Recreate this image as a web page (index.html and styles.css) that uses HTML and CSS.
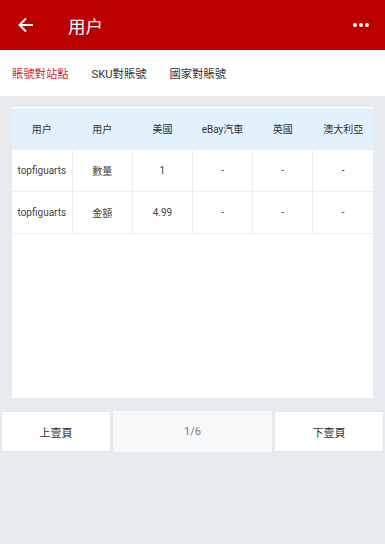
FILE: index.html
```html
<!DOCTYPE html>
<html lang="zh">
<head>
    <meta charset="UTF-8">
    <meta name="viewport" content="width=device-width, initial-scale=1.0">
    <title>用户</title>
    <link rel="stylesheet" href="styles.css">
</head>
<body>
    <div class="topbar">
        <span class="back">
            <svg width="16" height="16" viewBox="0 0 16 16">
                <path d="M15 8H2M8 1.5L1.5 8L8 14.5" fill="none" stroke="#fff" stroke-width="2"/>
            </svg>
        </span>
        <span class="title">用户</span>
        <span class="more"><i></i><i></i><i></i></span>
    </div>

    <div class="tabs">
        <span class="tab active">賬號對站點</span>
        <span class="tab">SKU對賬號</span>
        <span class="tab">國家對賬號</span>
    </div>

    <div class="main">
        <div class="card">
            <table class="grid">
                <tr>
                    <th>用户</th>
                    <th>用户</th>
                    <th>美國</th>
                    <th>eBay汽車</th>
                    <th>英國</th>
                    <th>澳大利亞</th>
                </tr>
                <tr>
                    <td>topfiguarts</td>
                    <td>數量</td>
                    <td>1</td>
                    <td>-</td>
                    <td>-</td>
                    <td>-</td>
                </tr>
                <tr>
                    <td>topfiguarts</td>
                    <td>金額</td>
                    <td>4.99</td>
                    <td>-</td>
                    <td>-</td>
                    <td>-</td>
                </tr>
            </table>
        </div>

        <div class="pager">
            <button class="page-btn">上壹頁</button>
            <span class="page-num">1/6</span>
            <button class="page-btn">下壹頁</button>
        </div>
    </div>
</body>
</html>
```

FILE: styles.css
```css
body {
    margin: 0;
    padding: 0;
    font-family: Roboto, "Noto Sans CJK SC", sans-serif;
    background-color: #e8ebee;
    color: #333;
}

.topbar {
    height: 50px;
    background-color: #bb0000;
    display: flex;
    align-items: center;
    color: #fff;
}

.back {
    width: 16px;
    height: 16px;
    margin-left: 18px;
    display: flex;
}

.title {
    margin-left: 34px;
    font-size: 17.5px;
}

.more {
    margin-left: auto;
    margin-right: 16px;
    display: flex;
    gap: 2px;
}

.more i {
    width: 4px;
    height: 4px;
    border-radius: 50%;
    background-color: #fff;
}

.tabs {
    height: 46px;
    background-color: #fff;
    display: flex;
    align-items: center;
    padding-left: 12px;
    gap: 23px;
    font-size: 11.3px;
    color: #333;
}

.tab.active {
    color: #d0272c;
}

.main {
    padding: 11px 0 0;
}

.card {
    margin: 0 12px;
    height: 290px;
    background-color: #fff;
    padding-top: 1px;
}

.grid {
    width: 100%;
    border-collapse: collapse;
    table-layout: fixed;
    font-size: 10px;
}

.grid th,
.grid td {
    height: 41px;
    padding: 0;
    text-align: center;
    border: 1px solid #eceff2;
    color: #444;
    font-weight: normal;
    white-space: nowrap;
}

.grid tr > :first-child {
    border-left: none;
}

.grid tr > :last-child {
    border-right: none;
}

.grid tr:first-child > * {
    border-top: none;
}

.grid th {
    background-color: #e3f1fc;
    color: #333;
}

.pager {
    margin-top: 13px;
    display: flex;
    gap: 2px;
    padding: 0 1px;
    height: 41px;
}

.page-btn {
    width: 110px;
    border: 1px solid #e2e5e8;
    border-radius: 2px;
    background-color: #fff;
    font-family: inherit;
    font-size: 11px;
    color: #333;
    padding: 0;
}

.page-num {
    flex: 1;
    display: flex;
    align-items: center;
    justify-content: center;
    background-color: #f7f8fa;
    font-size: 11px;
    color: #777;
}
```
